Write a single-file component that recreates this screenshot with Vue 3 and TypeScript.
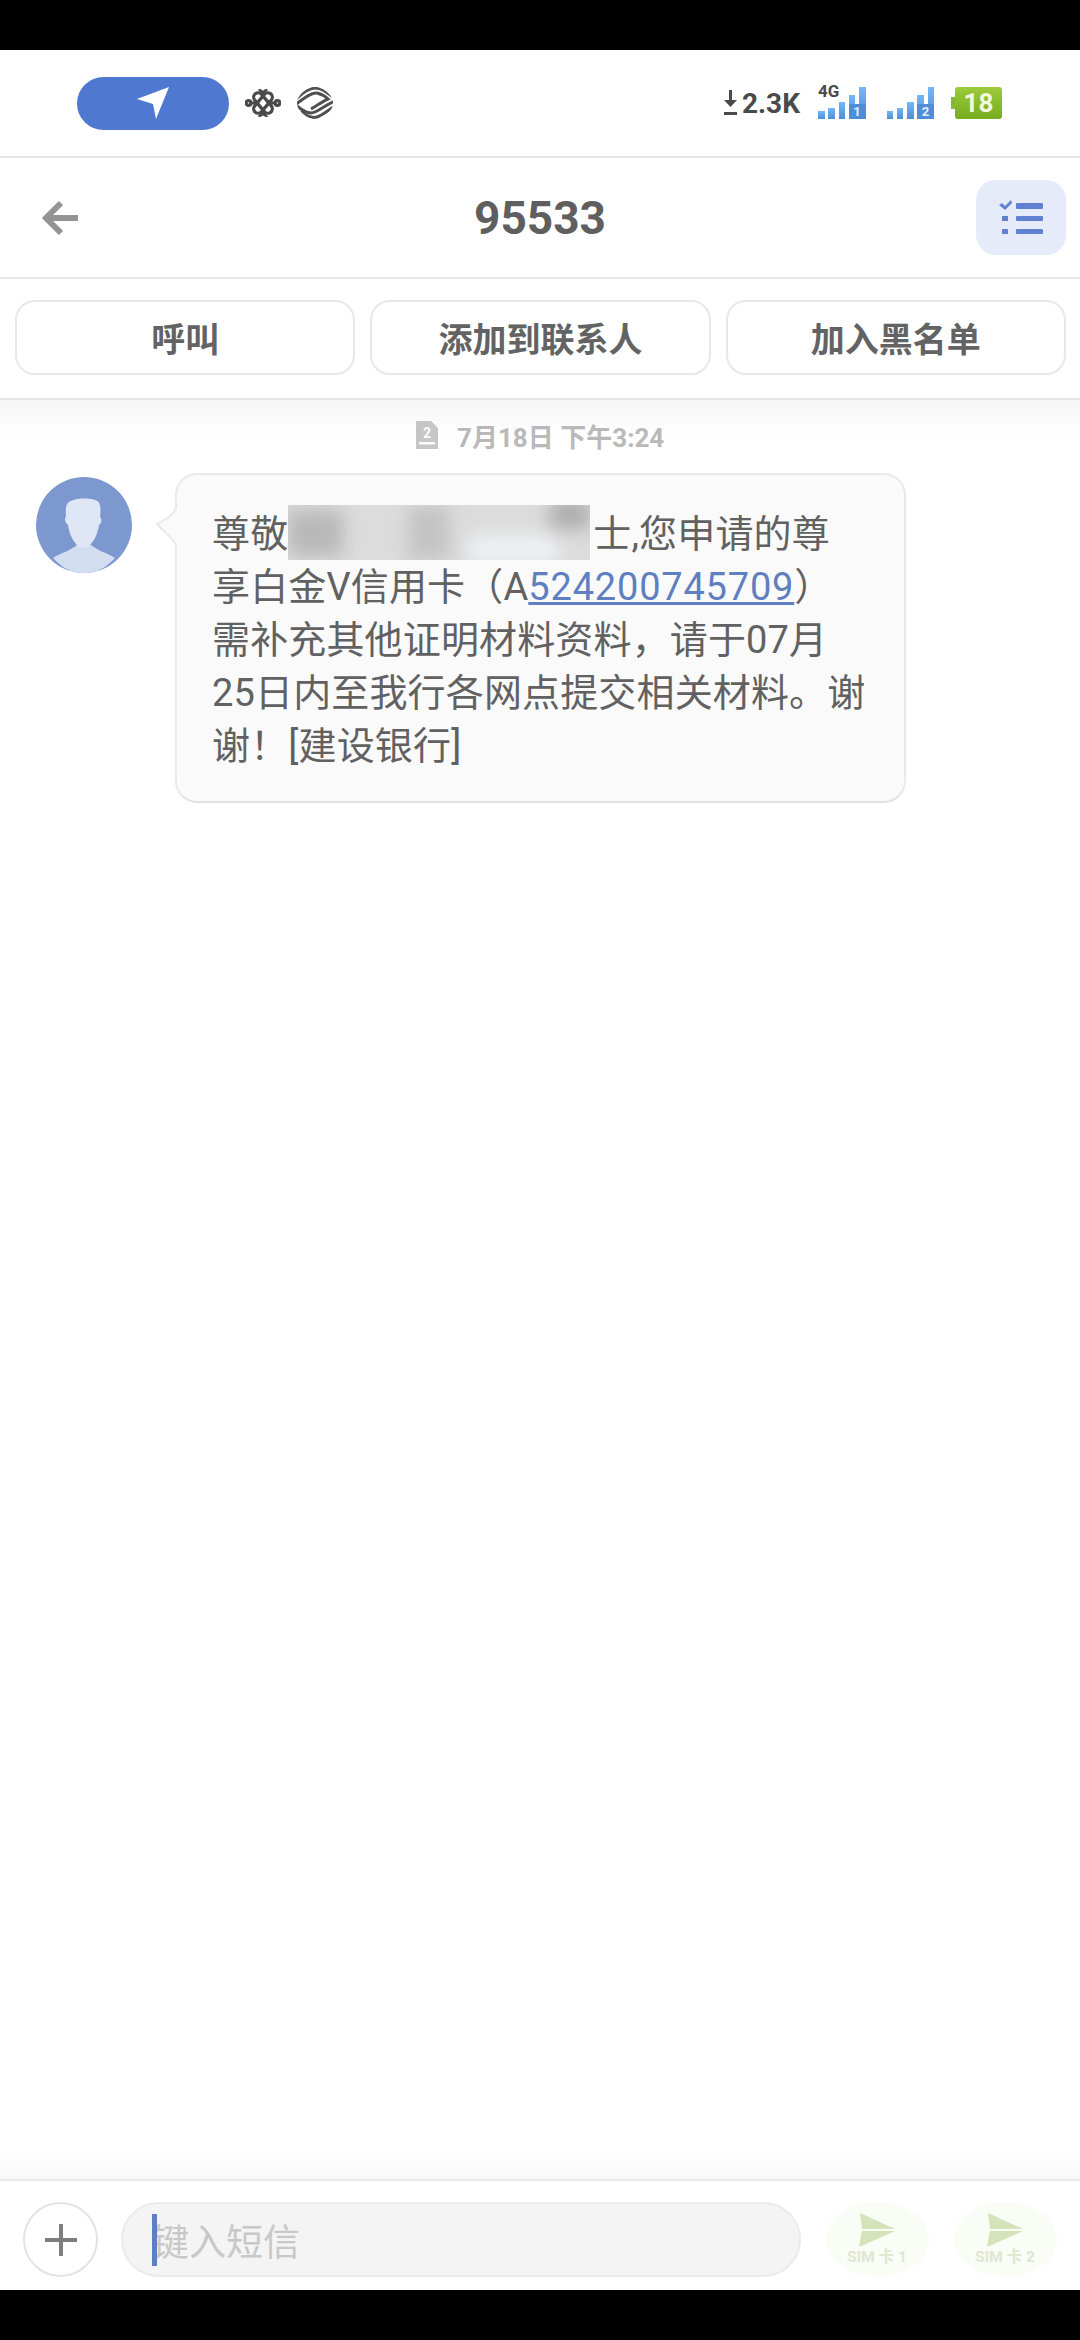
<template>
  <div class="screen">
    <div class="black-bar"></div>

    <header class="status">
      <div class="status__left">
        <div class="loc-pill">
          <svg width="34" height="34" viewBox="0 0 34 34"><path d="M33 1 L1 13 L17 18 L20 33 Z" fill="#fff" /></svg>
        </div>
        <svg class="unicom" width="36" height="30" viewBox="0 0 36 30" fill="none" stroke="#4a4a4a" stroke-width="3.2">
          <circle cx="3.5" cy="15" r="2.4" />
          <circle cx="32.5" cy="15" r="2.4" />
          <rect x="6" y="10.5" width="24" height="9" rx="4.5" transform="rotate(50 18 15)" />
          <rect x="6" y="10.5" width="24" height="9" rx="4.5" transform="rotate(-50 18 15)" />
          <path d="M14 3 C15 2 17 3 18 6 C19 3 21 2 22 3 M14 27 C15 28 17 27 18 24 C19 27 21 28 22 27" />
          <path d="M6 15 H12 M24 15 H30" />
        </svg>
        <svg class="mobile" width="36" height="32" viewBox="0 0 36 32" fill="none">
          <clipPath id="mobile-clip"><path d="M18 0 C26 0 36 8 36 16 C36 24 26 32 18 32 C10 32 0 24 0 16 C0 8 10 0 18 0 Z" /></clipPath>
          <g clip-path="url(#mobile-clip)" stroke="#505050" stroke-width="3">
            <path d="M-2 13 C4 7 12 1 18 1 C24 1 28 4 36 10" />
            <path d="M-2 18 C6 12 14 5 20 6 C24 7 28 9 31 12 C26 14 18 20 14 22" />
            <path d="M0 19 C6 24 10 26 14 26 C20 26 28 18 38 14" />
            <path d="M4 24 C10 30 16 31 20 30 C26 28 30 24 38 19" />
          </g>
        </svg>
      </div>
      <div class="status__right">
        <svg width="13" height="26" viewBox="0 0 13 26"><path d="M5 0 H8 V10 H13 L6.5 17 L0 10 H5 Z M0 22 H13 V25 H0 Z" fill="#4a4a4a" /></svg>
        <span class="speed">2.3K</span>
        <div v-for="sim in sims" :key="sim.n" class="signal" :class="{ 'signal--second': sim.n === 2 }">
          <span v-if="sim.label" class="signal__label">{{ sim.label }}</span>
          <span v-for="(h, i) in bars" :key="i" class="signal__bar" :style="{ height: h + 'px' }"></span>
          <span class="signal__num">{{ sim.n }}</span>
        </div>
        <div class="battery"><span>18</span></div>
      </div>
    </header>

    <nav class="toolbar">
      <svg class="back" width="38" height="36" viewBox="0 0 38 36" fill="none" stroke="#949494" stroke-width="6">
        <path d="M37 18 H5 M20 3 L5 18 L20 33" />
      </svg>
      <h1>95533</h1>
      <button class="list-btn" type="button">
        <svg width="44" height="36" viewBox="0 0 44 36" fill="#6081d3">
          <path d="M0 5 L3 3 L6 6 L12 0 L13 3 L6 10 Z" />
          <rect x="17" y="3" width="27" height="6" rx="1" />
          <rect x="3" y="16" width="6" height="5" />
          <rect x="17" y="16" width="27" height="5" rx="1" />
          <rect x="3" y="29" width="6" height="5" />
          <rect x="17" y="29" width="27" height="5" rx="1" />
        </svg>
      </button>
    </nav>

    <div class="actions">
      <button v-for="a in actions" :key="a" type="button">{{ a }}</button>
    </div>

    <main class="thread">
      <div class="date">
        <svg width="22" height="28" viewBox="0 0 22 28">
          <path d="M0 0 H15 L22 7 V28 H0 Z" fill="#c6c6c6" />
          <rect x="3" y="21" width="16" height="2.5" fill="#fbfbfb" />
          <text x="11" y="17" text-anchor="middle" font-size="14" font-weight="700" fill="#fbfbfb" font-family="Roboto, sans-serif">2</text>
        </svg>
        <span>7月18日 下午3:24</span>
      </div>

      <div class="msg">
        <div class="avatar">
          <svg width="96" height="96" viewBox="0 0 96 96">
            <circle cx="48" cy="48" r="48" fill="#7d98cf" />
            <path d="M17 81 C24 76 34 74 41 68 H55 C62 74 72 76 79 81 C70 91 60 96 48 96 C36 96 26 91 17 81 Z" fill="#d3ddf0" />
            <path d="M30 40 C29 28 31 24 38 23 C42 21 54 21 59 23 C65 24 65 32 64 40 C66 41 66 46 63 48 C62 56 58 65 52 70 C50 71 45 71 43 70 C37 65 33 56 32 48 C29 46 28 41 30 40 Z" fill="#dfe6f6" />
          </svg>
        </div>
        <div class="bubble">
          <svg class="bubble__tail" width="24" height="40" viewBox="0 0 24 40">
            <path d="M22 0 C20 8 12 12 2 17 C8 24 18 30 22 38 Z" fill="#fafafa" />
            <path d="M21 1 C19 8 11 12 2 17 C8 24 17 30 21 38" fill="none" stroke="#e9e9e9" stroke-width="2" />
          </svg>
          <p>尊敬<span class="redacted"><i class="r1"></i><i class="r2"></i><i class="r3"></i><i class="r4"></i></span>士,您申请的尊<br />享白金V信用卡（A<a href="#">524200745709</a>）<br />需补充其他证明材料资料，请于07月<br />25日内至我行各网点提交相关材料。谢<br />谢！[建设银行]</p>
        </div>
      </div>
    </main>

    <footer class="composer">
      <button class="plus" type="button">
        <svg width="32" height="32" viewBox="0 0 32 32"><path d="M14 0 H18 V14 H32 V18 H18 V32 H14 V18 H0 V14 H14 Z" fill="#7f7f7f" /></svg>
      </button>
      <div class="input"><i class="caret"></i><span>键入短信</span></div>
      <button v-for="n in [1, 2]" :key="n" class="send" type="button">
        <svg width="36" height="34" viewBox="0 0 36 34">
          <path d="M1 0 L36 16 H3 Z M3 18 H36 L0 34 Z" fill="#d5e3bb" />
        </svg>
        <span>SIM 卡 {{ n }}</span>
      </button>
    </footer>
    <div class="black-bar"></div>
  </div>
</template>

<script setup lang="ts">
interface Sim {
  n: number
  label?: string
}

const sims: Sim[] = [{ n: 1, label: '4G' }, { n: 2 }]
const bars = [8, 11, 17, 24, 32]
const actions = ['呼叫', '添加到联系人', '加入黑名单']
</script>

<style>
body {
  margin: 0;
  background: #000;
}
</style>

<style scoped>
.screen {
  width: 1080px;
  height: 2340px;
  display: flex;
  flex-direction: column;
  background: #fff;
  font-family: Roboto, "Noto Sans CJK SC", sans-serif;
  overflow: hidden;
}

.black-bar {
  height: 50px;
  flex: none;
  background: #000;
}

.status {
  height: 108px;
  flex: none;
  display: flex;
  align-items: center;
  justify-content: space-between;
  box-sizing: border-box;
  padding: 0 78px 0 77px;
  border-bottom: 2px solid #e6e6e6;
}

.status__left {
  display: flex;
  align-items: center;
}

.loc-pill {
  width: 152px;
  height: 53px;
  border-radius: 27px;
  background: #4f79d0;
  display: flex;
  align-items: center;
  justify-content: center;
  margin-right: 16px;
}

.unicom {
  margin-right: 16px;
}

.status__right {
  display: flex;
  align-items: center;
}

.speed {
  font-size: 28px;
  font-weight: 700;
  color: #4a4a4a;
  margin-left: 5px;
  margin-right: 18px;
}

.signal {
  position: relative;
  display: flex;
  align-items: flex-end;
  gap: 3.75px;
  height: 32px;
  margin-right: 21px;
}

.signal__bar {
  width: 6.5px;
  background: linear-gradient(#74b8f8, #4f8ed6);
}

.signal__label {
  position: absolute;
  left: 0;
  top: -5px;
  font-size: 17px;
  line-height: 18px;
  font-weight: 700;
  color: #4a4a4a;
}

.signal__num {
  position: absolute;
  right: 0;
  bottom: 0;
  width: 17px;
  height: 15px;
  background: #4f8ed6;
  text-align: center;
  font-size: 13px;
  line-height: 15px;
  font-weight: 700;
  color: #e4f1ff;
}

.signal--second {
  margin-right: 17px;
}

.battery {
  position: relative;
  width: 47px;
  height: 32px;
  margin-left: 4px;
  border-radius: 3px;
  background: linear-gradient(#9ccb3c, #75ac1e);
  display: flex;
  align-items: center;
  justify-content: center;
  font-size: 26px;
  font-weight: 700;
  color: #f2f8dc;
}

.battery::before {
  content: "";
  position: absolute;
  left: -4px;
  top: 10px;
  width: 4px;
  height: 12px;
  background: #86b92c;
}

.toolbar {
  position: relative;
  height: 121px;
  flex: none;
  box-sizing: border-box;
  display: flex;
  align-items: center;
  justify-content: space-between;
  padding: 0 14px 0 41px;
  border-bottom: 2px solid #e8e8e8;
}

.toolbar h1 {
  position: absolute;
  left: 0;
  right: 0;
  margin: 0;
  text-align: center;
  font-size: 46px;
  font-weight: 700;
  color: #5f5f5f;
}

.list-btn {
  width: 90px;
  height: 75px;
  padding: 0;
  border: none;
  border-radius: 20px;
  background: #e5ebf9;
  display: flex;
  align-items: center;
  justify-content: center;
}

.actions {
  height: 121px;
  flex: none;
  box-sizing: border-box;
  display: flex;
  align-items: center;
  gap: 15px;
  padding: 0 14px 2px 15px;
  border-bottom: 2px solid #e6e6e6;
}

.actions button {
  flex: 1;
  height: 75px;
  padding: 0;
  border: 2px solid #e8e8e8;
  border-radius: 20px;
  background: #fff;
  font-family: inherit;
  font-size: 34px;
  font-weight: 700;
  color: #636363;
}

.thread {
  flex: 1;
  min-height: 0;
  background: linear-gradient(#f5f5f5, #fff 36px, #fff calc(100% - 30px), #f8f8f8);
  padding: 15px 0 0 36px;
}

.date {
  display: flex;
  align-items: center;
  gap: 19px;
  margin-left: 380px;
  height: 40px;
  font-size: 26px;
  font-weight: 700;
  color: #b9b9b9;
}

.msg {
  display: flex;
  align-items: flex-start;
  gap: 43px;
  margin-top: 18px;
}

.avatar {
  flex: none;
  width: 96px;
  height: 96px;
  margin-top: 4px;
}

.bubble {
  position: relative;
  box-sizing: border-box;
  width: 731px;
  height: 330px;
  padding: 30px 0 0 35px;
  background: #fafafa;
  border: 2px solid #e9e9e9;
  border-bottom-color: #e0e0e0;
  border-radius: 22px;
}

.bubble__tail {
  position: absolute;
  left: -22px;
  top: 32px;
}

.bubble p {
  margin: 0;
  font-size: 38px;
  line-height: 53px;
  letter-spacing: 0.15px;
  color: #616161;
  white-space: nowrap;
}

.bubble a {
  color: #5f7fc0;
  text-decoration: underline;
  letter-spacing: 0.8px;
}

.redacted {
  position: relative;
  display: inline-block;
  width: 302px;
  height: 55px;
  margin-right: 3px;
  vertical-align: -13px;
  overflow: hidden;
  background: #dcdcdc;
}

.redacted i {
  position: absolute;
  filter: blur(9px);
}

.r1 {
  left: 0;
  top: 5px;
  width: 55px;
  height: 46px;
  background: #b8b8b8;
}

.r2 {
  left: 120px;
  top: 0;
  width: 42px;
  height: 55px;
  background: #c4c4c4;
}

.r3 {
  left: 180px;
  top: 30px;
  width: 90px;
  height: 30px;
  background: #eff0f4;
}

.r4 {
  left: 262px;
  top: -6px;
  width: 40px;
  height: 30px;
  background: #adadad;
}

.composer {
  height: 111px;
  flex: none;
  box-sizing: border-box;
  display: flex;
  align-items: center;
  padding: 8px 23px 0;
  border-top: 2px solid #e9e9e9;
}

.plus {
  width: 75px;
  height: 75px;
  flex: none;
  padding: 0;
  border: 2px solid #e3e3e3;
  border-radius: 50%;
  background: #fff;
  display: flex;
  align-items: center;
  justify-content: center;
}

.input {
  position: relative;
  box-sizing: border-box;
  width: 680px;
  height: 75px;
  margin-left: 23px;
  margin-right: 24px;
  padding-left: 29px;
  background: #f4f4f4;
  border: 2px solid #ebebeb;
  border-radius: 38px;
  display: flex;
  align-items: center;
  font-size: 37px;
  color: #c8c8c8;
}

.caret {
  position: absolute;
  left: 29px;
  top: 10px;
  width: 5px;
  height: 52px;
  background: #5e7fc6;
}

.send {
  width: 104px;
  height: 75px;
  flex: none;
  margin-right: 24px;
  padding: 0;
  border: none;
  border-radius: 50%;
  background: #fafcf6;
  display: flex;
  flex-direction: column;
  align-items: center;
  justify-content: flex-start;
  padding-top: 11px;
  font-family: inherit;
  font-size: 15.5px;
  font-weight: 700;
  line-height: 20px;
  color: #dfe7cf;
}

.send:last-of-type {
  margin-right: 0;
}
</style>
